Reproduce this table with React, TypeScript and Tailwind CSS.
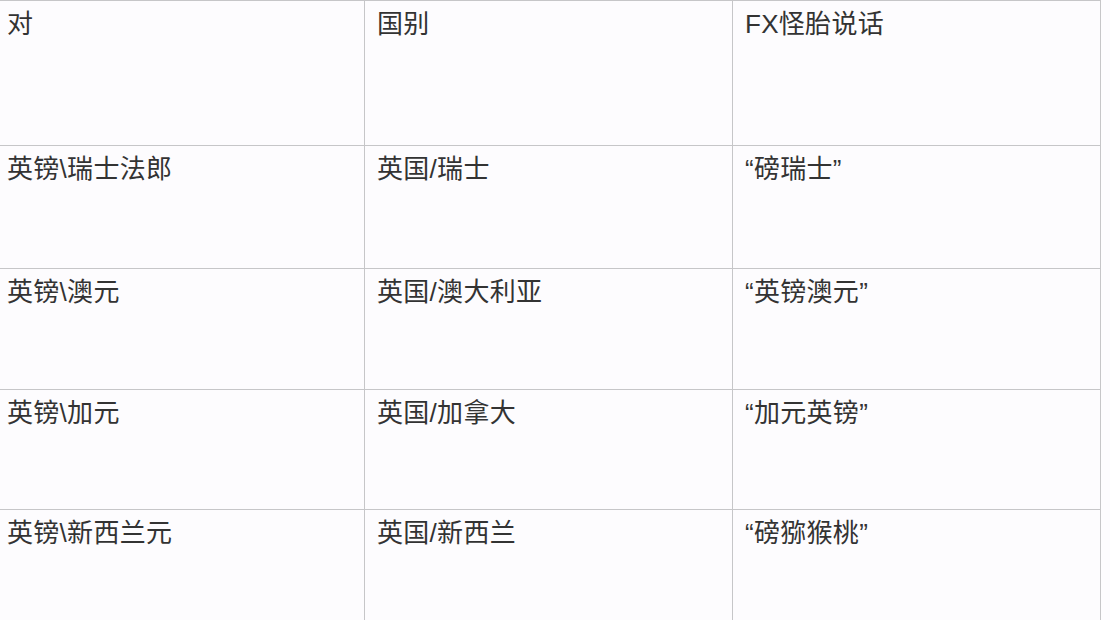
import React from 'react';

const rows: { h: string; cells: string[] }[] = [
  { h: 'h-[144px]', cells: ['对', '国别', 'FX怪胎说话'] },
  { h: 'h-[123px]', cells: ['英镑\\瑞士法郎', '英国/瑞士', '“磅瑞士”'] },
  { h: 'h-[121px]', cells: ['英镑\\澳元', '英国/澳大利亚', '“英镑澳元”'] },
  { h: 'h-[120px]', cells: ['英镑\\加元', '英国/加拿大', '“加元英镑”'] },
  { h: 'h-[140px]', cells: ['英镑\\新西兰元', '英国/新西兰', '“磅猕猴桃”'] },
];

export default function App() {
  return (
    <div
      className="w-[1110px] h-[620px] overflow-hidden bg-[#fdfcfe] text-[#333333]"
      style={{ fontFamily: '"Liberation Sans", "Noto Sans CJK SC", sans-serif' }}
    >
      <div className="ml-[-5px] w-[1106px] border-t border-r border-[#c6c6c8]">
        {rows.map((row, i) => (
          <div
            key={i}
            className={`grid grid-cols-[369px_368px_368px] ${row.h} ${i > 0 ? 'border-t border-[#c6c6c8]' : ''}`}
          >
            {row.cells.map((c, j) => (
              <div
                key={j}
                className={`pl-[12px] pt-[7px] text-[26px] leading-[32px] tracking-[0.3px] ${j > 0 ? 'border-l border-[#c6c6c8]' : ''}`}
              >
                {c}
              </div>
            ))}
          </div>
        ))}
      </div>
    </div>
  );
}
